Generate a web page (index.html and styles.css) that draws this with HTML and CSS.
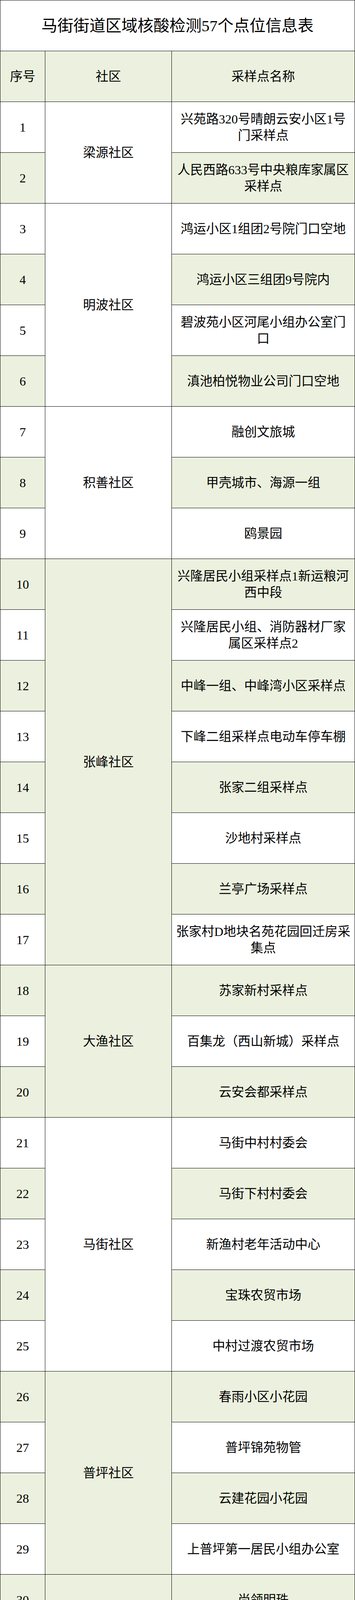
FILE: index.html
```html
<!DOCTYPE html>
<html lang="zh-CN">
<head>
<meta charset="utf-8">
<title>马街街道区域核酸检测57个点位信息表</title>
<link rel="stylesheet" href="styles.css">
</head>
<body>
<div class="sheet">
  <div class="cell title">马街街道区域核酸检测57个点位信息表</div>
  <div class="cell seq g">序号</div>
  <div class="cell comm g">社区</div>
  <div class="cell site g">采样点名称</div>

  <div class="cell seq">1</div>
  <div class="cell comm span2">梁源社区</div>
  <div class="cell site">兴苑路320号晴朗云安小区1号<br>门采样点</div>
  <div class="cell seq g">2</div>
  <div class="cell site g">人民西路633号中央粮库家属区<br>采样点</div>

  <div class="cell seq">3</div>
  <div class="cell comm span4">明波社区</div>
  <div class="cell site">鸿运小区1组团2号院门口空地</div>
  <div class="cell seq g">4</div>
  <div class="cell site g">鸿运小区三组团9号院内</div>
  <div class="cell seq">5</div>
  <div class="cell site">碧波苑小区河尾小组办公室门<br>口</div>
  <div class="cell seq g">6</div>
  <div class="cell site g">滇池柏悦物业公司门口空地</div>

  <div class="cell seq">7</div>
  <div class="cell comm span3">积善社区</div>
  <div class="cell site">融创文旅城</div>
  <div class="cell seq g">8</div>
  <div class="cell site g">甲壳城市、海源一组</div>
  <div class="cell seq">9</div>
  <div class="cell site">鸥景园</div>

  <div class="cell seq g">10</div>
  <div class="cell comm g span8">张峰社区</div>
  <div class="cell site g">兴隆居民小组采样点1新运粮河<br>西中段</div>
  <div class="cell seq">11</div>
  <div class="cell site">兴隆居民小组、消防器材厂家<br>属区采样点2</div>
  <div class="cell seq g">12</div>
  <div class="cell site g">中峰一组、中峰湾小区采样点</div>
  <div class="cell seq">13</div>
  <div class="cell site">下峰二组采样点电动车停车棚</div>
  <div class="cell seq g">14</div>
  <div class="cell site g">张家二组采样点</div>
  <div class="cell seq">15</div>
  <div class="cell site">沙地村采样点</div>
  <div class="cell seq g">16</div>
  <div class="cell site g">兰亭广场采样点</div>
  <div class="cell seq">17</div>
  <div class="cell site">张家村D地块名苑花园回迁房采<br>集点</div>

  <div class="cell seq g">18</div>
  <div class="cell comm g span3">大渔社区</div>
  <div class="cell site g">苏家新村采样点</div>
  <div class="cell seq">19</div>
  <div class="cell site">百集龙（西山新城）采样点</div>
  <div class="cell seq g">20</div>
  <div class="cell site g">云安会都采样点</div>

  <div class="cell seq">21</div>
  <div class="cell comm span5">马街社区</div>
  <div class="cell site">马街中村村委会</div>
  <div class="cell seq g">22</div>
  <div class="cell site g">马街下村村委会</div>
  <div class="cell seq">23</div>
  <div class="cell site">新渔村老年活动中心</div>
  <div class="cell seq g">24</div>
  <div class="cell site g">宝珠农贸市场</div>
  <div class="cell seq">25</div>
  <div class="cell site">中村过渡农贸市场</div>

  <div class="cell seq g">26</div>
  <div class="cell comm g span4">普坪社区</div>
  <div class="cell site g">春雨小区小花园</div>
  <div class="cell seq">27</div>
  <div class="cell site">普坪锦苑物管</div>
  <div class="cell seq g">28</div>
  <div class="cell site g">云建花园小花园</div>
  <div class="cell seq">29</div>
  <div class="cell site">上普坪第一居民小组办公室</div>

  <div class="cell seq g">30</div>
  <div class="cell comm g span6">德缘社区</div>
  <div class="cell site g">尚领明珠</div>
  <div class="cell seq">31</div>
  <div class="cell site">兴苑新居</div>
  <div class="cell seq g">32</div>
  <div class="cell site g">城市领地</div>
  <div class="cell seq">33</div>
  <div class="cell site">香格里拉</div>
  <div class="cell seq g">34</div>
  <div class="cell site g">德缘北区</div>
  <div class="cell seq">35</div>
  <div class="cell site">德缘南区</div>

  <div class="cell seq g">36</div>
  <div class="cell comm g span10">西丽园社区</div>
  <div class="cell site g">兰亭上锦一期1号采样点</div>
  <div class="cell seq">37</div>
  <div class="cell site">兰亭上锦一期2号采样点</div>
  <div class="cell seq g">38</div>
  <div class="cell site g">兰亭上锦二期1号采样点</div>
  <div class="cell seq">39</div>
  <div class="cell site">兰亭上锦二期2号采样点</div>
  <div class="cell seq g">40</div>
  <div class="cell site g">西楚花园小区采样点</div>
  <div class="cell seq">41</div>
  <div class="cell site">怡芳苑一期、丰和苑小区采样<br>点</div>
  <div class="cell seq g">42</div>
  <div class="cell site g">西丽园小区、磷肥厂小区采样<br>点</div>
  <div class="cell seq">43</div>
  <div class="cell site">人和新居采样点</div>
  <div class="cell seq g">44</div>
  <div class="cell site g">国城、幸福时光小区采样点</div>
  <div class="cell seq">45</div>
  <div class="cell site">怡芳苑二期采样点</div>

  <div class="cell seq g">46</div>
  <div class="cell comm g span8">春雨路社区</div>
  <div class="cell site g">电机厂建设村采样点</div>
  <div class="cell seq">47</div>
  <div class="cell site">电缆厂生活区1号采样点</div>
  <div class="cell seq g">48</div>
  <div class="cell site g">电缆厂生活区3号采样点</div>
  <div class="cell seq">49</div>
  <div class="cell site">冶炼厂生活区1号采样点</div>
  <div class="cell seq g">50</div>
  <div class="cell site g">冶炼厂生活区2号采样点</div>
  <div class="cell seq">51</div>
  <div class="cell site">春雨阳光、变压器厂、西山区<br>建筑经营公司、糖烟酒公司采<br>样点</div>
  <div class="cell seq g">52</div>
  <div class="cell site g">城市山小区采样点</div>
  <div class="cell seq">53</div>
  <div class="cell site">正基春天里采样点</div>

  <div class="cell seq g">54</div>
  <div class="cell comm g span4">马街北路社区</div>
  <div class="cell site g">昆明市第十九中学</div>
  <div class="cell seq">55</div>
  <div class="cell site">昆明电池厂停车场</div>
  <div class="cell seq g">56</div>
  <div class="cell site g">四季阳光小区</div>
  <div class="cell seq">57</div>
  <div class="cell site">摩尔城小区</div>

  <div class="watermark">
    <svg class="wb-logo" width="36" height="30" viewBox="0 0 36 30" aria-hidden="true">
      <g fill="#ffffff" stroke="#8c8c8c" stroke-width="1.3" stroke-linejoin="round">
        <path d="M14 9 C7 10 2 16 3 21 C4 27 12 29.5 19 27.5 C26 25.5 29 20.5 27 17.5 C26 15.8 24 15.6 23 15.8 C24 12.5 22 10.6 18.5 11.6 C17.5 12 16.5 12.4 15.8 12.6 C16.6 10.4 16 9 14 9 Z"/>
        <ellipse cx="13.5" cy="21.5" rx="7" ry="4.8"/>
        <circle cx="12.5" cy="22" r="2.3" fill="#8c8c8c" stroke="none"/>
        <path d="M23 3.5 A9 9 0 0 1 32.5 13.5" fill="none" stroke-width="2.6" stroke-linecap="round"/>
        <path d="M23 8.5 A4.5 4.5 0 0 1 27.8 13.2" fill="none" stroke-width="2.2" stroke-linecap="round"/>
      </g>
    </svg>
    <span class="wb-text">@昆明市西山区发布</span>
  </div>
</div>
</body>
</html>
```

FILE: styles.css
```css
html, body {
  margin: 0;
  padding: 0;
  background: #ffffff;
}

.sheet {
  position: relative;
  width: 909px;
  box-sizing: border-box;
  display: grid;
  grid-template-columns: 115px 324px 469px;
  grid-auto-rows: 130px;
  border-top: 1px solid #000;
  border-left: 1px solid #000;
  font-family: "Liberation Serif", "Noto Sans CJK SC", serif;
  color: #000;
}

.cell {
  box-sizing: border-box;
  border-right: 1px solid #000;
  border-bottom: 1px solid #000;
  display: flex;
  align-items: center;
  justify-content: center;
  text-align: center;
  font-size: 32.5px;
  line-height: 42px;
  padding: 0 4px;
  background: #ffffff;
}

.g {
  background: #ebf1de;
}

.title {
  grid-column: 1 / -1;
  font-size: 41px;
  line-height: 50px;
}

.seq { grid-column: 1; }
.comm { grid-column: 2; }
.site { grid-column: 3; }

.span2 { grid-row: span 2; }
.span3 { grid-row: span 3; }
.span4 { grid-row: span 4; }
.span5 { grid-row: span 5; }
.span6 { grid-row: span 6; }
.span8 { grid-row: span 8; }
.span10 { grid-row: span 10; }

.watermark {
  position: absolute;
  right: 8px;
  bottom: 6px;
  display: flex;
  align-items: center;
  gap: 2px;
}

.wb-logo {
  display: block;
}

.wb-text {
  font-family: "Noto Sans CJK SC", "Noto Sans", sans-serif;
  font-weight: 700;
  font-size: 24px;
  line-height: 30px;
  color: #ffffff;
  text-shadow: 0 0 2px rgba(0, 0, 0, 0.55), 1px 1px 1px rgba(0, 0, 0, 0.35);
}
```
